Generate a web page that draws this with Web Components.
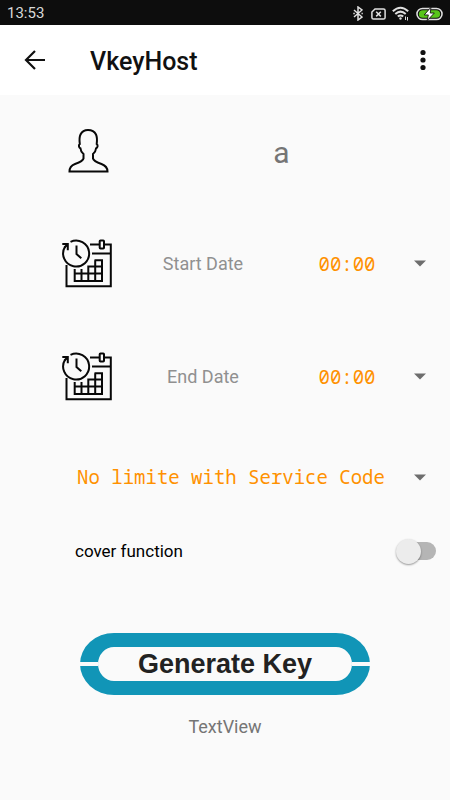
<!DOCTYPE html>
<html lang="en">
<head>
<meta charset="utf-8">
<meta name="viewport" content="width=device-width, initial-scale=1">
<title>VkeyHost</title>
<style>
  body { margin: 0; min-height: 100vh; background: #fafafa; font-family: Roboto, sans-serif; color: #000; }
</style>
</head>
<body>
<vkey-app></vkey-app>
<script>
const define = (name, html, setup) => {
  const template = document.createElement('template');
  template.innerHTML = html;
  customElements.define(name, class extends HTMLElement {
    constructor() {
      super();
      this.attachShadow({ mode: 'open' }).append(template.content.cloneNode(true));
    }
    connectedCallback() { if (setup) setup(this, this.shadowRoot); }
  });
};

define('status-bar', `
<style>
  :host { display: flex; align-items: center; justify-content: space-between; box-sizing: border-box; height: 25px; padding: 2px 7px 0; background: #0d0d0d; color: #d8d8d8; font-size: 15px; line-height: 23px; }
  .icons { display: flex; align-items: center; gap: 6px; }
  svg { display: block; fill: none; stroke: #e0e0e0; }
  .bluetooth { margin-right: 2px; }
</style>
<span>13:53</span>
<div class="icons">
  <svg class="bluetooth" width="10" height="15" viewBox="0 0 10 15" stroke-width="1.5"><path d="M1 4l8 7-4 3V1l4 3-8 7"/><path d="M.3 7.5h1.500M8.500 7.500h1.300"/></svg>
  <svg width="15" height="12" viewBox="0 0 15 12" stroke-width="1.500"><path d="M4 .9h8.500q1.600 0 1.600 1.600v7q0 1.600-1.600 1.600h-10Q.9 11.100 .9 9.500V4z"/><path d="M5.200 3.800l4.600 4.600M9.800 3.800L5.200 8.400"/></svg>
  <svg width="18" height="15" viewBox="0 0 18 15" stroke-width="2"><path d="M.8 5.300q7.700-7 15.400 0M3.300 8q5.200-4.700 10.400 0M5.800 10.600q2.700-2.300 5.400 0"/><circle cx="8.500" cy="12.500" r="1.200" fill="#e0e0e0" stroke="none"/><path stroke-width="1" d="M13.500 10.500v3.500M15.500 11v3.500"/></svg>
  <svg width="27" height="14" viewBox="0 0 28 14"><rect x="1" y="1.200" width="26" height="11.600" rx="5.800" stroke-width="1.600"/><rect x="3" y="3" width="22" height="8" rx="4" fill="#58c51b" stroke="none"/><path d="M15.500 0L8.500 8h4.300L11.500 14l7.500-8h-4.200z" fill="#fff" stroke="#0d0d0d" stroke-width=".9"/></svg>
</div>`);

define('app-bar', `
<style>
  :host { display: flex; align-items: center; min-height: 70px; padding: 0 12px 0 20px; background: #fff; }
  button { display: grid; place-items: center; width: 30px; height: 40px; padding: 0; border: 0; background: none; }
  h1 { flex: 1; margin: 0 0 0 40px; padding-top: 3px; font-size: 25px; line-height: 32px; font-weight: 500; color: #111; }
</style>
<button aria-label="Back"><svg width="22" height="22" viewBox="0 0 22 22" fill="none" stroke="#111" stroke-width="2.200"><path d="M11 2L2 11l9 9M2 11h19"/></svg></button>
<h1><slot></slot></h1>
<button aria-label="More options"><svg width="6" height="22" viewBox="0 0 6 22" fill="#111"><circle cx="3" cy="3.500" r="2.600"/><circle cx="3" cy="11" r="2.600"/><circle cx="3" cy="18.500" r="2.600"/></svg></button>`);

define('drop-down', `
<style>
  :host { display: grid; align-items: center; }
  select, svg { grid-area: 1 / 1; }
  select { appearance: none; width: 100%; height: 40px; padding: 0 35px 0 0; border: 0; background: none; color: #ff9100; font: 19px "Noto Sans Mono", "DejaVu Sans Mono", monospace; text-align: center; text-align-last: center; }
  svg { justify-self: end; margin-right: 10px; pointer-events: none; }
</style>
<select><option></option></select>
<svg width="12" height="7" viewBox="0 0 12 7" fill="#6d6d6d"><path d="M0 .5h12L6 6.500z"/></svg>`,
(host, root) => {
  root.querySelector('option').textContent = host.getAttribute('value');
  root.querySelector('select').setAttribute('aria-label', host.getAttribute('label'));
});

define('date-row', `
<style>
  :host { display: grid; grid-template-columns: 52px 1fr 143px; align-items: center; min-height: 113px; padding: 0 14px 0 61px; }
  button { height: 40px; padding: 0; border: 0; background: none; color: #909090; font: 18px Roboto, sans-serif; }
  svg { display: block; }
</style>
<svg width="52" height="50" viewBox="0 0 52 50" fill="none" stroke="#080808" stroke-width="2">
  <path d="M29 5.500h9.500M43 5.500h6.800V47.300H5.500V26M31 14.500h19"/>
  <rect x="38.700" y="1.500" width="4.300" height="8" rx=".8"/>
  <path d="M9.500 2.800A13 13 0 1 1 4 7.800"/>
  <path d="M15.500 6.500v8.500l4.800 4.300"/>
  <path d="M1.300 5h5.500v6.300M6.500 5.300L3.500 8.500"/>
  <path d="M13.700 30v12H41V21.200h-7.500M20.500 30v12M27.300 26.500V42M34.200 21.200V42M13.700 34.500H41M26.300 27.500H41"/>
</svg>
<button><slot></slot></button>
<drop-down value="00:00"></drop-down>`,
(host, root) => root.querySelector('drop-down').setAttribute('label', host.textContent + ' time'));

define('user-row', `
<style>
  :host { display: grid; grid-template-columns: 52px 1fr; align-items: center; min-height: 112px; padding-left: 61px; }
  svg { display: block; margin-left: 7px; }
  output { padding-top: 3px; text-align: center; font-size: 30px; line-height: 36px; color: #757575; }
</style>
<svg width="41" height="44" viewBox="0 0 41 44" fill="none" stroke="#080808" stroke-width="2"><path d="M1.500 42.500h38c0-4-2-6-6-7.500-5-1.800-8-3-8.500-5.500v-4.500c2-1.500 2.800-3 3-5.500 2-1 2-3.500.7-4.500.5-4 .5-7-.7-9.500C26.500 2.500 23.500 1 20 1s-6 1.500-7.500 4.500c-1.200 2.500-1.200 5.500-.7 9.500-1.300 1-1.300 3.500.7 4.500.2 2.500 1 4 3 5.500v4.500c-.5 2.500-3.500 3.700-8.500 5.500-4 1.500-5.500 3.500-5.500 7.500z"/></svg>
<output><slot></slot></output>`);

define('toggle-row', `
<style>
  :host { display: block; }
  label { display: flex; align-items: center; justify-content: space-between; min-height: 60px; padding: 0 14px 0 75px; font-size: 17px; line-height: 24px; }
  input { appearance: none; display: flex; align-items: center; width: 36px; height: 18px; margin: 0; border-radius: 9px; background: #b5b5b5; }
  input::before { content: ""; flex: none; width: 25px; height: 25px; margin-left: -4px; border-radius: 50%; background: #ececec; box-shadow: 0 1px 2px #0006; }
  input:checked::before { margin-left: 15px; }
</style>
<label><span><slot></slot></span><input type="checkbox" role="switch"></label>`);

define('key-button', `
<style>
  :host { display: block; margin: 52px 80px 0; }
  button { position: relative; display: block; width: 100%; height: 62px; padding: 0; border: solid #1195b7; border-width: 14px 18px; border-radius: 34px / 31px; background: #fafafa; color: #222; font: bold 27px/32px "Liberation Sans", Arial, sans-serif; white-space: nowrap; }
  button::before, button::after { content: ""; position: absolute; top: 15px; width: 19px; height: 4px; background: #fafafa; }
  button::before { left: -19px; }
  button::after { right: -19px; }
</style>
<button><slot></slot></button>`);

define('vkey-app', `
<style>
  :host { display: block; }
  .service { min-height: 88px; padding: 0 14px 0 61px; }
  p { margin: 20px 0 0; text-align: center; font-size: 18px; line-height: 24px; color: #757575; }
</style>
<status-bar></status-bar>
<app-bar>VkeyHost</app-bar>
<main>
  <user-row>a</user-row>
  <date-row>Start Date</date-row>
  <date-row>End Date</date-row>
  <drop-down class="service" label="Service limit" value="No limite with Service Code"></drop-down>
  <toggle-row>cover function</toggle-row>
  <key-button>Generate Key</key-button>
  <p>TextView</p>
</main>`);
</script>
</body>
</html>
